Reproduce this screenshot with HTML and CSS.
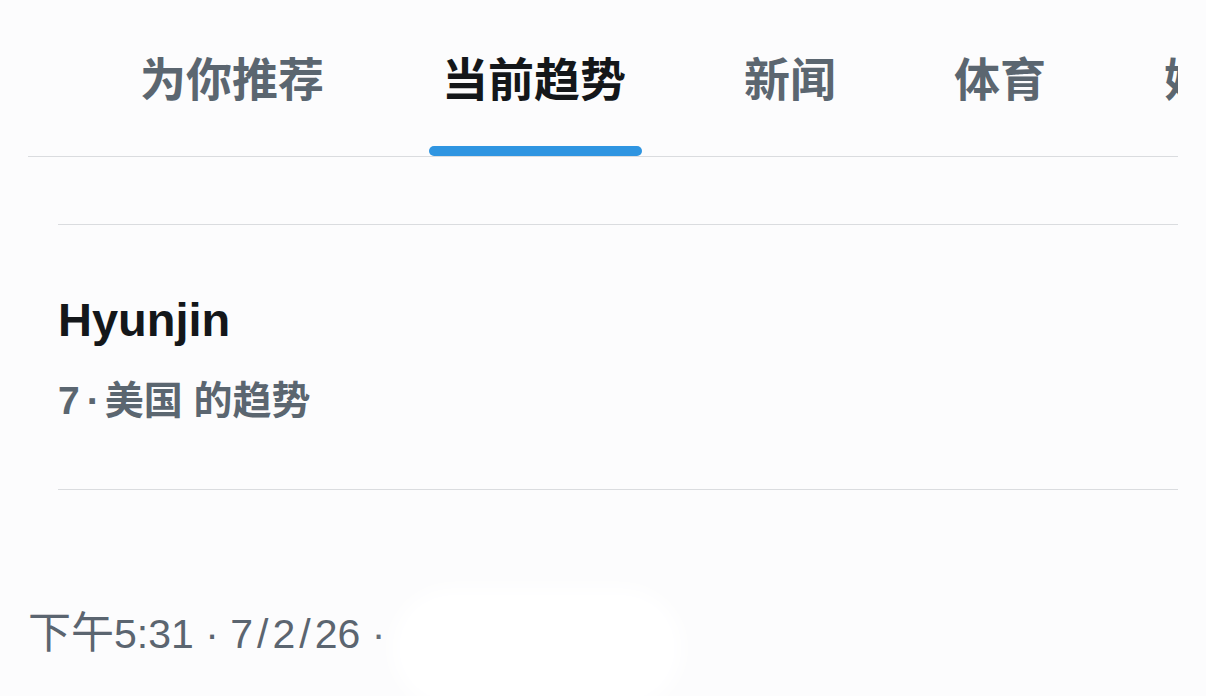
FILE: index.html
```html
<!DOCTYPE html>
<html lang="zh-CN">

<head>
    <meta charset="UTF-8">
    <meta name="viewport" content="width=device-width, initial-scale=1.0">
    <title>探索 - 当前趋势</title>
    <link rel="stylesheet" href="styles.css">
</head>

<body>
    <div class="page">
        <nav class="tabs">
            <span class="tab">为你推荐</span>
            <span class="tab active">当前趋势</span>
            <span class="tab">新闻</span>
            <span class="tab">体育</span>
            <span class="tab">娱乐</span>
        </nav>

        <div class="trends">
            <div class="trend-item">
                <div class="trend-name">Hyunjin</div>
                <div class="trend-meta">7<span class="dot">·</span>美国 的趋势</div>
            </div>
        </div>

        <div class="timestamp"><span class="cjk">下午</span>5:31 · 7<span class="slash">/</span>2<span class="slash">/</span>26 ·</div>
        <div class="blank-patch"></div>
    </div>
</body>

</html>
```

FILE: styles.css
```css
body {
    margin: 0;
    background: #fcfcfd;
    font-family: "Liberation Sans", "Noto Sans CJK SC", sans-serif;
    color: #14171a;
}

.page {
    position: relative;
    width: 1206px;
    height: 696px;
    overflow: hidden;
}

/* 顶部分类标签 */
.tabs {
    display: flex;
    box-sizing: border-box;
    width: 1150px;
    height: 157px;
    margin-left: 28px;
    padding-left: 53px;
    border-bottom: 1px solid #dadcdf;
    overflow: hidden;
}

.tab {
    position: relative;
    flex-shrink: 0;
    display: flex;
    align-items: center;
    padding: 0 59px 4px;
    font-family: "Noto Sans CJK SC", sans-serif;
    font-size: 46px;
    font-weight: 700;
    color: #5b6670;
    white-space: nowrap;
}

.tab.active {
    color: #14171a;
}

.tab.active::after {
    content: "";
    position: absolute;
    left: 46px;
    width: 213px;
    bottom: 0;
    height: 10px;
    border-radius: 5px;
    background: #2f95e1;
}

/* 趋势列表 */
.trends {
    width: 1120px;
    margin: 67px 0 0 58px;
    border-top: 1px solid #dadcdf;
}

.trend-item {
    padding: 67px 0 64px;
    border-bottom: 1px solid #dadcdf;
}

.trend-name {
    font-size: 47px;
    font-weight: 700;
    line-height: 56px;
    color: #14171a;
}

.trend-meta {
    margin-top: 29px;
    font-size: 39px;
    font-weight: 700;
    line-height: 48px;
    color: #5b6670;
}

.trend-meta .dot {
    margin: 0 5px 0 7px;
}

.timestamp {
    margin: 118px 0 0 28px;
    font-size: 41px;
    line-height: 50px;
    color: #5b6570;
}

.timestamp .cjk {
    font-size: 43px;
}

.timestamp .slash {
    margin: 0 4px;
}

.blank-patch {
    position: absolute;
    left: 392px;
    top: 588px;
    width: 290px;
    height: 120px;
    border-radius: 60px;
    background: #ffffff;
    filter: blur(10px);
}
```
